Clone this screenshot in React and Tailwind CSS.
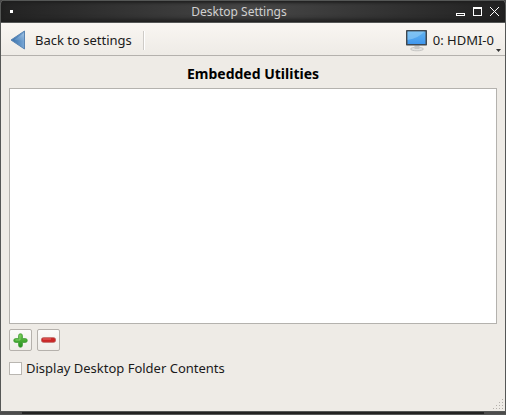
import React from "react";

function TitleBar() {
  return (
    <header className="relative flex h-[23px] items-center justify-between border-t border-b border-t-[#555756] border-b-[#555756] bg-[#303030] bg-[linear-gradient(to_right,#222,#464646,#222)] pr-[6px] pl-[9px] shadow-[inset_0_2px_3px_#202020,inset_0_-3px_4px_#202020]">
      <button type="button" aria-label="Window menu" className="flex h-3 w-3 items-center justify-start">
        <span className="h-[3px] w-[3px] bg-white" />
      </button>
      <h1 className="pointer-events-none absolute inset-x-0 pr-7 text-center text-[12px] leading-4 text-[#d0d0d0]">
        Desktop Settings
      </h1>
      <div className="flex items-center gap-2">
        <button type="button" aria-label="Minimize">
          <svg className="block" width="9" height="9" viewBox="0 0 9 9" shapeRendering="crispEdges">
            <path d="M0.5 6.5h8v2h-8z" fill="none" stroke="#fff" />
          </svg>
        </button>
        <button type="button" aria-label="Maximize">
          <svg className="block" width="9" height="9" viewBox="0 0 9 9" shapeRendering="crispEdges">
            <path d="M0.5 0.5h8v8h-8zM0 1.5h9" fill="none" stroke="#fff" />
          </svg>
        </button>
        <button type="button" aria-label="Close">
          <svg className="block" width="9" height="9" viewBox="0 0 9 9">
            <path d="M0 0l9 9M9 0L0 9" fill="none" stroke="#fff" />
          </svg>
        </button>
      </div>
    </header>
  );
}

function BackIcon() {
  return (
    <svg className="block" width="16" height="20" viewBox="0 0 16 20">
      <defs>
        <linearGradient id="back" x1="0" y1="0" x2="1" y2="0">
          <stop offset="0" stopColor="#3a70aa" />
          <stop offset="0.5" stopColor="#5589be" />
          <stop offset="1" stopColor="#7aa8d6" />
        </linearGradient>
        <linearGradient id="backShine" x1="0" y1="0" x2="0" y2="1">
          <stop offset="0" stopColor="#b4cfe9" stopOpacity="0.7" />
          <stop offset="1" stopColor="#8fb4da" stopOpacity="0.2" />
        </linearGradient>
      </defs>
      <path d="M14.500 1v18L1 10z" fill="url(#back)" stroke="#5a84b2" strokeLinejoin="round" />
      <path d="M14 3v7.500Q9 10 4 10z" fill="url(#backShine)" />
    </svg>
  );
}

function MonitorIcon() {
  return (
    <svg className="block" width="22" height="22" viewBox="0 0 22 22">
      <defs>
        <linearGradient id="screen" x1="0" y1="0" x2="0" y2="1">
          <stop offset="0" stopColor="#64b4f0" />
          <stop offset="1" stopColor="#3f97ee" />
        </linearGradient>
      </defs>
      <ellipse cx="11" cy="19" rx="6.500" ry="1.800" fill="#e2e2e0" stroke="#b8b8b6" strokeWidth="0.7" />
      <path d="M8.500 15.500h5v3.500h-5z" fill="#c6c6c4" />
      <rect x="0" y="0" width="21" height="15.500" rx="0.7" fill="#40484f" />
      <rect x="1.500" y="1.500" width="18" height="12.500" fill="url(#screen)" />
      <path d="M1.500 1.500h17Q13 8 1.500 10z" fill="#9bd3f8" opacity="0.5" />
    </svg>
  );
}

function Toolbar() {
  return (
    <nav className="flex h-[33px] items-center justify-between border-b border-[#b4b1ad] bg-linear-to-b from-[#f9f6f2] to-[#eeebe6] pt-[2px] pr-1 pl-[9px]">
      <div className="flex items-center">
        <button type="button" className="flex items-center gap-[9px] text-[13px] leading-5">
          <BackIcon />
          Back to settings
        </button>
        <span className="ml-[11px] h-[19px] w-[2px] border-r border-l border-r-white border-l-[#cecbc7]" />
      </div>
      <button type="button" className="flex items-center text-[13px] leading-5">
        <span className="pt-[2px]">
          <MonitorIcon />
        </span>
        <span className="mr-[2px] ml-[5px]">0: HDMI-0</span>
        <svg className="mt-5 block" width="5" height="3" viewBox="0 0 5 3">
          <path d="M0 0h5L2.500 3z" fill="#333" />
        </svg>
      </button>
    </nav>
  );
}

const buttonClass =
  "flex h-[22px] w-[23px] items-center justify-center rounded-[2px] border border-[#b5b1ac] bg-linear-to-b from-[#fcfbfa] to-[#efece8]";

function AddIcon() {
  return (
    <svg className="block" width="15" height="15" viewBox="0 0 15 15">
      <defs>
        <linearGradient id="plus" x1="0" y1="0" x2="0" y2="1">
          <stop offset="0" stopColor="#6cc64c" />
          <stop offset="1" stopColor="#25911f" />
        </linearGradient>
      </defs>
      <path
        d="M7.5 0.7q2 0 2 2v2.8h2.8q2 0 2 2t-2 2H9.500v2.800q0 2-2 2t-2-2V9.500H2.700q-2 0-2-2t2-2h2.800V2.700q0-2 2-2z"
        fill="url(#plus)"
        stroke="#3f9a33"
        strokeWidth="0.7"
      />
      <path d="M7 2v5H2.500" fill="none" stroke="#9bdd80" strokeWidth="1" opacity="0.7" />
    </svg>
  );
}

function RemoveIcon() {
  return (
    <svg className="block" width="15" height="6" viewBox="0 0 15 6">
      <rect x="0.5" y="0.7" width="14" height="4.600" rx="1.8" fill="#cb2626" stroke="#b85553" strokeWidth="0.8" />
      <path d="M2 2h8" stroke="#e86a68" strokeWidth="1" />
    </svg>
  );
}

function SizeGrip() {
  return (
    <svg className="block" width="12" height="12" viewBox="0 0 12 12" shapeRendering="crispEdges">
      <path
        d="M10 1h1v1h-1zM7 4h1v1H7zM10 4h1v1h-1zM4 7h1v1H4zM7 7h1v1H7zM10 7h1v1h-1zM1 10h1v1H1zM4 10h1v1H4zM7 10h1v1H7zM10 10h1v1h-1z"
        fill="#b4b0ab"
      />
    </svg>
  );
}

export default function App() {
  return (
    <div className="flex min-h-screen flex-col bg-[#4b4b4b] font-['Noto_Sans',sans-serif] text-[#1a1a1a]">
      <div className="flex grow flex-col overflow-hidden rounded-t-[5px] border-r border-l border-[#555756] bg-[#eeebe6]">
        <TitleBar />
        <Toolbar />
        <main className="flex grow flex-col px-2 pt-2">
          <h2 id="utilities" className="text-center text-[14px] leading-5 font-bold text-black">
            Embedded Utilities
          </h2>
          <ul aria-labelledby="utilities" className="mt-1 min-h-[200px] grow border border-[#b4b2ae] bg-white" />
          <div className="mt-[5px] flex gap-[5px]">
            <button type="button" aria-label="Add" className={buttonClass}>
              <AddIcon />
            </button>
            <button type="button" aria-label="Remove" className={buttonClass}>
              <RemoveIcon />
            </button>
          </div>
          <label className="mt-[7px] flex items-center gap-1 self-start text-[13px] leading-5">
            <input
              type="checkbox"
              className="h-[13px] w-[13px] appearance-none border border-[#b9b6b1] bg-white checked:bg-[#5b8fc7]"
            />
            Display Desktop Folder Contents
          </label>
        </main>
        <footer className="mt-5 flex justify-end pr-[1px] pb-[1px]">
          <SizeGrip />
        </footer>
      </div>
      <div className="h-1 border-t border-b border-[#555756] px-[22px]">
        <div className="h-[2px] bg-[#222]" />
      </div>
    </div>
  );
}
